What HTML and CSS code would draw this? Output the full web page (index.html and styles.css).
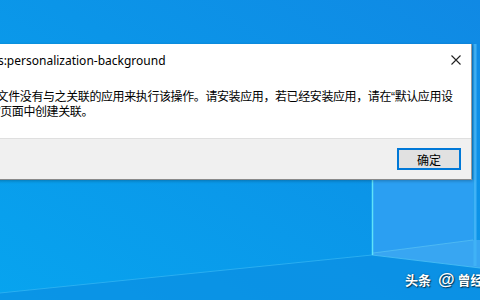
FILE: index.html
```html
<!DOCTYPE html>
<html lang="zh-CN">
<head>
    <meta charset="UTF-8">
    <meta name="viewport" content="width=device-width, initial-scale=1.0">
    <title>ms-settings:personalization-background</title>
    <link rel="stylesheet" href="styles.css">
</head>
<body>
<div class="desktop">
    <svg class="wallpaper" viewBox="0 0 480 300" preserveAspectRatio="none">
        <defs>
            <linearGradient id="sky" x1="0" y1="1" x2="1" y2="0">
                <stop offset="0" stop-color="#07a4ef"/>
                <stop offset="0.55" stop-color="#0b95e8"/>
                <stop offset="1" stop-color="#1089e4"/>
            </linearGradient>
        </defs>
        <rect width="480" height="300" fill="url(#sky)"/>
        <!-- window of light -->
        <polygon points="372,179 473,179 473,240 372,253" fill="#2b9ff2"/>
        <polygon points="372,253 473,240 480,240 480,268 372,255" fill="#38a6f2"/>
        <polygon points="0,300 0,293 372,255 480,268 480,300" fill="#0c8ee2" opacity="0.7"/>
        <line x1="0" y1="293" x2="372" y2="255" stroke="#38b8f4" stroke-width="1" opacity="0.7"/>
        <line x1="372" y1="255" x2="480" y2="268" stroke="#4fc2f6" stroke-width="1" opacity="0.8"/>
        <line x1="373" y1="253" x2="473" y2="240" stroke="#5cc4f7" stroke-width="1" opacity="0.7"/>
        <line x1="372.5" y1="179" x2="372.5" y2="255" stroke="#5fe2f9" stroke-width="1.5"/>
        <line x1="475" y1="44" x2="475" y2="266" stroke="#40b2f6" stroke-width="3"/>
    </svg>

    <div class="dialog">
        <div class="title-bar">
            <span class="title">ms-settings:personalization-background</span>
            <span class="close">
                <svg width="10" height="10" viewBox="0 0 10 10">
                    <path d="M0.5 0.5 L9.5 9.5 M9.5 0.5 L0.5 9.5" stroke="#222" stroke-width="1.1" fill="none"/>
                </svg>
            </span>
        </div>
        <div class="message">
            该文件没有与之关联的应用来执行该操作。请安装应用，若已经安装应用，请在<span class="quote">“</span>默认应用设置<span class="quote">”</span>页面中创建关联。
        </div>
        <div class="footer">
            <button class="ok-button">确定</button>
        </div>
    </div>

    <div class="watermark">头条 <span class="at">@</span>曾经沧海</div>
</div>
</body>
</html>
```

FILE: styles.css
```css
html,
body {
    margin: 0;
    padding: 0;
    width: 480px;
    height: 300px;
    overflow: hidden;
}

body {
    font-family: "Noto Sans", "Noto Sans CJK SC", sans-serif;
    font-size: 12px;
    color: #000;
}

.desktop {
    position: relative;
    width: 480px;
    height: 300px;
    overflow: hidden;
}

.wallpaper {
    position: absolute;
    left: 0;
    top: 0;
    width: 480px;
    height: 300px;
}

/* the message box sits on the desktop, partly off screen */
.dialog {
    position: absolute;
    left: -80px;
    top: 44px;
    width: 551px;
    height: 135px;
    background: #fff;
    border-right: 1px solid #9b9b9b;
    border-bottom: 1px solid #8a8a8a;
    display: flex;
    flex-direction: column;
    box-shadow: 1px 1px 3px rgba(0, 0, 0, 0.25);
}

.title-bar {
    height: 32px;
    display: flex;
    align-items: center;
    justify-content: space-between;
}

.title {
    padding-left: 18px;
    font-size: 12px;
    color: #000;
}

.close {
    width: 30px;
    height: 30px;
    display: flex;
    align-items: center;
    justify-content: center;
}

.message {
    flex: 1;
    padding: 13px 13px 0 65px;
    font-family: "Noto Sans CJK SC", sans-serif;
    font-size: 12px;
    letter-spacing: -0.4px;
    line-height: 14px;
    color: #000;
}

.quote {
    font-family: "Liberation Sans", sans-serif;
}

.footer {
    height: 41px;
    background: #f0f0f0;
    border-top: 1px solid #dfdfdf;
    display: flex;
    justify-content: flex-end;
    align-items: flex-start;
    padding: 9px 10px 0 0;
    box-sizing: border-box;
}

.ok-button {
    width: 64px;
    height: 22px;
    background: #e1e1e1;
    border: 2px solid #0078d7;
    font-family: "Noto Sans CJK SC", sans-serif;
    font-size: 12px;
    color: #000;
    padding: 0;
}

.watermark {
    position: absolute;
    left: 405px;
    top: 270px;
    font-family: "Noto Sans CJK SC", sans-serif;
    font-size: 13px;
    line-height: 20px;
    font-weight: bold;
    color: #fff;
    white-space: nowrap;
    text-shadow: 1px 1px 1px rgba(0, 0, 0, 0.6), 0 0 2px rgba(0, 0, 0, 0.4);
}

.watermark .at {
    font-family: "Liberation Sans", sans-serif;
    font-size: 17px;
    margin: 0 3px 0 4px;
}
```
